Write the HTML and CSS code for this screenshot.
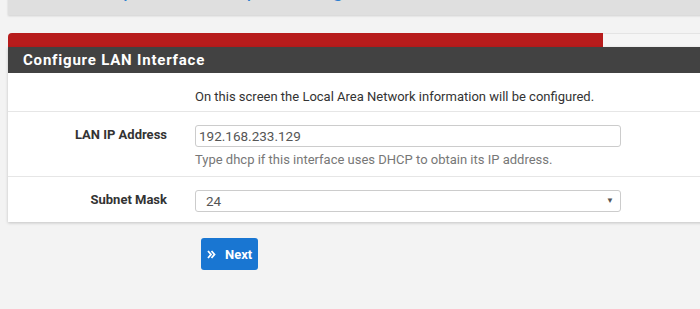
FILE: index.html
```html
<!DOCTYPE html>
<html lang="en">
  <head>
    <meta charset="UTF-8" />
    <title>pfSense - Wizard</title>
    <link rel="stylesheet" href="styles.css">
  </head>
  <body>
    <div class="page">
      <div class="crumbs">
        <h1>
          <a href="#">Wizard</a><span class="sep">/</span><a href="#">pfSense Setup</a><span class="sep">/</span><a href="#">Configure LAN Interface</a>
        </h1>
      </div>

      <div class="progress">
        <div class="progress-bar" style="width: 83.6%"></div>
      </div>

      <div class="panel">
        <div class="panel-heading">Configure LAN Interface</div>

        <div class="row">
          <div></div>
          <div class="desc">On this screen the Local Area Network information will be configured.</div>
        </div>

        <div class="row row-field">
          <label class="label" for="lanip">LAN IP Address</label>
          <div>
            <input class="field" id="lanip" type="text" value="192.168.233.129" />
            <div class="help">Type dhcp if this interface uses DHCP to obtain its IP address.</div>
          </div>
        </div>

        <div class="row row-field row-last">
          <label class="label" for="mask">Subnet Mask</label>
          <div>
            <div class="select">
              <span>24</span>
              <span class="caret">&#9660;</span>
            </div>
          </div>
        </div>
      </div>

      <button class="btn">
        <svg width="9" height="9" viewBox="0 0 9 9">
          <path d="M1 1l3 3.5L1 8M4.5 1l3 3.5-3 3.5" fill="none" stroke="#fff" stroke-width="1.8" />
        </svg>
        Next
      </button>
    </div>
  </body>
</html>
```

FILE: styles.css
```css
html {
  overflow: hidden;
}

body {
  font-family: Roboto, "Liberation Sans", sans-serif;
  background-color: #f3f3f3;
  color: #333;
  margin: 0;
}

.page {
  width: 712px;
  margin-left: 8px;
}

/* breadcrumb panel, scrolled mostly out of view */
.crumbs {
  background-color: #dfdfdf;
  height: 60px;
  margin-top: -45px;
  box-shadow: 0 1px 2px rgba(0, 0, 0, 0.15);
  box-sizing: border-box;
  padding: 24px 0 0 26px;
}

.crumbs h1 {
  margin: 0;
  font-size: 21px;
  font-weight: 400;
  line-height: 22px;
}

.crumbs a {
  color: #2f7fcf;
  text-decoration: none;
}

.crumbs .sep {
  color: #c62828;
  padding: 0 8px;
}

/* wizard progress */
.progress {
  margin-top: 18px;
  height: 14px;
  background-color: #f5f5f5;
  border-top: 1px solid #e4e4e4;
  box-sizing: border-box;
  border-radius: 4px 0 0 0;
}

.progress-bar {
  height: 14px;
  margin-top: -1px;
  background-color: #b71c1c;
  border-radius: 4px 0 0 0;
}

.panel {
  background-color: #fff;
  box-shadow: 0 1px 3px rgba(0, 0, 0, 0.2);
}

.panel-heading {
  background-color: #424242;
  color: #fff;
  font-size: 15px;
  font-weight: 700;
  letter-spacing: 0.8px;
  height: 26px;
  line-height: 27px;
  padding-left: 15px;
}

.row {
  display: grid;
  grid-template-columns: 159px 426px;
  column-gap: 28px;
  font-size: 13px;
  line-height: 18px;
  padding: 15px 0 5px;
  border-bottom: 1px solid #e6e6e6;
}

.row-field {
  padding: 13px 0 7px;
}

.row-last {
  padding-bottom: 10px;
  border-bottom: none;
}

.label {
  text-align: right;
  font-weight: 700;
  font-size: 13px;
  padding-top: 1px;
}

.field,
.select {
  display: block;
  width: 426px;
  height: 22px;
  box-sizing: border-box;
  border: 1px solid #ccc;
  border-radius: 3px;
  font-family: Roboto, "Liberation Sans", sans-serif;
  font-size: 13.5px;
  color: #555;
  padding: 0 0 0 3px;
  margin: 0;
}

.select {
  display: flex;
  justify-content: space-between;
  align-items: center;
  padding-right: 6px;
  padding-left: 10px;
}

.caret {
  font-size: 8px;
  color: #555;
}

.help {
  color: #777;
  margin-top: 4px;
}

.btn {
  display: flex;
  align-items: center;
  gap: 9px;
  margin: 16px 0 0 193px;
  width: 57px;
  height: 32px;
  padding: 0 0 0 6px;
  border: none;
  border-radius: 3px;
  background-color: #1976d2;
  color: #fff;
  font-family: Roboto, "Liberation Sans", sans-serif;
  font-size: 13px;
  font-weight: 700;
  cursor: pointer;
}
```
